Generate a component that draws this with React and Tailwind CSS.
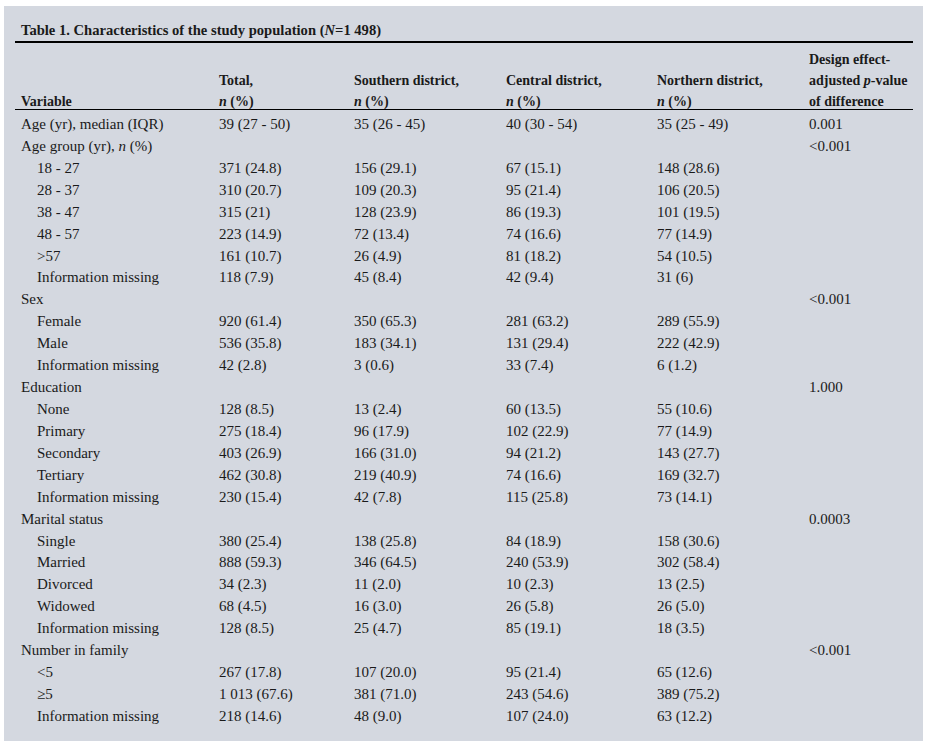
import React from "react";

const rows = [
  { v: "Age (yr), median (IQR)", c: ["39 (27 - 50)", "35 (26 - 45)", "40 (30 - 54)", "35 (25 - 49)", "0.001"] },
  { v: <>Age group (yr), <i>n</i> (%)</>, c: ["", "", "", "", "<0.001"] },
  { v: "18 - 27", sub: true, c: ["371 (24.8)", "156 (29.1)", "67 (15.1)", "148 (28.6)", ""] },
  { v: "28 - 37", sub: true, c: ["310 (20.7)", "109 (20.3)", "95 (21.4)", "106 (20.5)", ""] },
  { v: "38 - 47", sub: true, c: ["315 (21)", "128 (23.9)", "86 (19.3)", "101 (19.5)", ""] },
  { v: "48 - 57", sub: true, c: ["223 (14.9)", "72 (13.4)", "74 (16.6)", "77 (14.9)", ""] },
  { v: ">57", sub: true, c: ["161 (10.7)", "26 (4.9)", "81 (18.2)", "54 (10.5)", ""] },
  { v: "Information missing", sub: true, c: ["118 (7.9)", "45 (8.4)", "42 (9.4)", "31 (6)", ""] },
  { v: "Sex", c: ["", "", "", "", "<0.001"] },
  { v: "Female", sub: true, c: ["920 (61.4)", "350 (65.3)", "281 (63.2)", "289 (55.9)", ""] },
  { v: "Male", sub: true, c: ["536 (35.8)", "183 (34.1)", "131 (29.4)", "222 (42.9)", ""] },
  { v: "Information missing", sub: true, c: ["42 (2.8)", "3 (0.6)", "33 (7.4)", "6 (1.2)", ""] },
  { v: "Education", c: ["", "", "", "", "1.000"] },
  { v: "None", sub: true, c: ["128 (8.5)", "13 (2.4)", "60 (13.5)", "55 (10.6)", ""] },
  { v: "Primary", sub: true, c: ["275 (18.4)", "96 (17.9)", "102 (22.9)", "77 (14.9)", ""] },
  { v: "Secondary", sub: true, c: ["403 (26.9)", "166 (31.0)", "94 (21.2)", "143 (27.7)", ""] },
  { v: "Tertiary", sub: true, c: ["462 (30.8)", "219 (40.9)", "74 (16.6)", "169 (32.7)", ""] },
  { v: "Information missing", sub: true, c: ["230 (15.4)", "42 (7.8)", "115 (25.8)", "73 (14.1)", ""] },
  { v: "Marital status", c: ["", "", "", "", "0.0003"] },
  { v: "Single", sub: true, c: ["380 (25.4)", "138 (25.8)", "84 (18.9)", "158 (30.6)", ""] },
  { v: "Married", sub: true, c: ["888 (59.3)", "346 (64.5)", "240 (53.9)", "302 (58.4)", ""] },
  { v: "Divorced", sub: true, c: ["34 (2.3)", "11 (2.0)", "10 (2.3)", "13 (2.5)", ""] },
  { v: "Widowed", sub: true, c: ["68 (4.5)", "16 (3.0)", "26 (5.8)", "26 (5.0)", ""] },
  { v: "Information missing", sub: true, c: ["128 (8.5)", "25 (4.7)", "85 (19.1)", "18 (3.5)", ""] },
  { v: "Number in family", c: ["", "", "", "", "<0.001"] },
  { v: "<5", sub: true, c: ["267 (17.8)", "107 (20.0)", "95 (21.4)", "65 (12.6)", ""] },
  { v: "\u22655", sub: true, c: ["1 013 (67.6)", "381 (71.0)", "243 (54.6)", "389 (75.2)", ""] },
  { v: "Information missing", sub: true, c: ["218 (14.6)", "48 (9.0)", "107 (24.0)", "63 (12.2)", ""] },
];

const cols = "grid grid-cols-[198px_135px_152px_151px_152px_110px]";

const Head = ({ children }) => (
  <div className="flex flex-col justify-end pl-[6px]">
    <div className="flex flex-col -mb-[3px]">{children}</div>
  </div>
);

export default function App() {
  return (
    <div className="min-h-screen bg-white pt-[6px] pl-[4px] font-['Liberation_Serif',serif] text-[#1a1a1a]">
      <div className="w-[919px] h-[735px] bg-[#d4d8e0] pl-[11px] pr-[10px] pt-[14px]">
        {/* Title */}
        <div className="border-b-2 border-black pb-[1px] pl-[6px] text-[14.6px] font-bold leading-[20px]">
          Table 1. Characteristics of the study population (<i>N</i>=1 498)
        </div>

        {/* Header */}
        <div className={`${cols} h-[67px] border-b border-black text-[14px] font-bold leading-[21px] whitespace-nowrap`}>
          <Head>
            <span>Variable</span>
          </Head>
          <Head>
            <span>Total,</span>
            <span><i>n</i> (%)</span>
          </Head>
          <Head>
            <span>Southern district,</span>
            <span><i>n</i> (%)</span>
          </Head>
          <Head>
            <span>Central district,</span>
            <span><i>n</i> (%)</span>
          </Head>
          <Head>
            <span>Northern district,</span>
            <span><i>n</i> (%)</span>
          </Head>
          <Head>
            <span>Design effect-</span>
            <span>adjusted <i>p</i>-value</span>
            <span>of difference</span>
          </Head>
        </div>

        {/* Body */}
        <div className="pt-[4px] text-[15px]">
          {rows.map((r, i) => (
            <div key={i} className={`${cols} h-[21.93px] leading-[21.93px] whitespace-nowrap`}>
              <div className={r.sub ? "pl-[22px]" : "pl-[6px]"}>{r.v}</div>
              {r.c.map((c, j) => (
                <div key={j} className="pl-[6px]">{c}</div>
              ))}
            </div>
          ))}
        </div>
      </div>
    </div>
  );
}
